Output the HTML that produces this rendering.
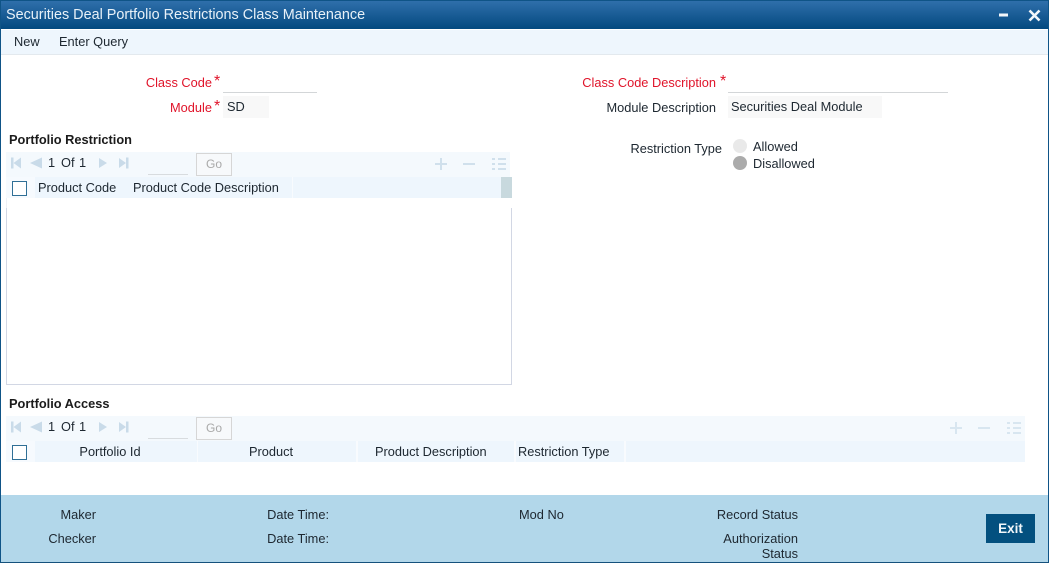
<!DOCTYPE html>
<html><head><meta charset="utf-8"><style>
html,body{margin:0;padding:0;background:#fff;width:1049px;height:565px;overflow:hidden}
body{position:relative;font-family:"Liberation Sans",Arial,sans-serif;font-size:12.8px;color:#1d2730}
.a{position:absolute}
.t{position:absolute;white-space:nowrap;line-height:18px}
.r{text-align:right}
.c{text-align:center}
.red{color:#e0142a}
.s{font-size:16px;line-height:18px}
.b{font-weight:bold;color:#1b1b1b}
.cb{position:absolute;width:13px;height:13px;border:1px solid #2f6f96;background:#fff}
.go{position:absolute;width:34px;height:21px;border:1px solid #d6d6d6;color:#a9a9a9;text-align:center;line-height:21px;background:#f7f9fb;box-sizing:content-box;font-size:12px}
</style></head><body>
<div class="a" style="left:0;top:0;width:1049px;height:563px;box-sizing:border-box;border:1px solid #0f5487;border-bottom:0"></div>
<div class="a" style="left:1px;top:1px;width:1047px;height:28px;background:linear-gradient(#2f6fab,#03497f)"></div>
<div class="t" style="left:6px;top:6px;color:#e8f1f8;font-size:14.4px">Securities Deal Portfolio Restrictions Class Maintenance</div>
<svg class="a" style="left:990px;top:4px" width="56" height="22"><path d="M9 11h9" stroke="#f2f6fa" stroke-width="3"/><path d="M39.500 6.500l10 10M49.500 6.500l-10 10" stroke="#f2f6fa" stroke-width="2.6"/></svg>
<div class="a" style="left:1px;top:30px;width:1047px;height:24px;background:#eef6fd;border-bottom:1px solid #e3e9ee"></div>
<div class="t" style="left:14px;top:33px">New</div>
<div class="t" style="left:59px;top:33px">Enter Query</div>

<div class="t r red" style="left:100px;width:112px;top:74px">Class Code</div><div class="t red s" style="left:214px;top:73px">*</div>
<div class="a" style="left:223px;top:92px;width:94px;height:1px;background:#d3d6d8"></div>
<div class="t r red" style="left:100px;width:112px;top:99px">Module</div><div class="t red s" style="left:214px;top:98px">*</div>
<div class="a" style="left:223px;top:96px;width:46px;height:22px;background:#f8f8f8"></div>
<div class="t" style="left:227px;top:98px">SD</div>

<div class="t r red" style="left:520px;width:196px;top:74px">Class Code Description</div><div class="t red s" style="left:720px;top:73px">*</div>
<div class="a" style="left:728px;top:92px;width:220px;height:1px;background:#d3d6d8"></div>
<div class="t r" style="left:520px;width:196px;top:99px">Module Description</div>
<div class="a" style="left:728px;top:96px;width:154px;height:22px;background:#f8f8f8"></div>
<div class="t" style="left:731px;top:98px">Securities Deal Module</div>
<div class="t r" style="left:560px;width:162px;top:140px">Restriction Type</div>
<div class="a" style="left:733px;top:139px;width:14px;height:14px;border-radius:50%;background:#e9e9e9"></div>
<div class="t" style="left:753px;top:138px">Allowed</div>
<div class="a" style="left:733px;top:156px;width:14px;height:14px;border-radius:50%;background:#ababab"></div>
<div class="t" style="left:753px;top:155px">Disallowed</div>

<!-- Portfolio Restriction -->
<div class="t b" style="left:9px;top:131px">Portfolio Restriction</div>
<div class="a" style="left:6px;top:152px;width:504px;height:25px;background:#f4f9fd"></div>
<div class="a" style="left:6px;top:177px;width:495px;height:21px;background:#eef6fd"></div>
<div class="a" style="left:6px;top:177px;width:29px;height:21px;background:#f6fafe"></div>
<div class="a" style="left:501px;top:177px;width:11px;height:21px;background:#c8d9de"></div>
<div class="a" style="left:292px;top:177px;width:1px;height:21px;background:#f8fbfe"></div>
<svg class="a" style="left:9px;top:156px" width="122" height="14" fill="#c9dbe9"><path d="M2 1.500h2.500v11H2zM12 1.500v11L4.500 7zM33 1.500v11L21 7zM90 2l8 5-8 5zM110 2l7 5-7 5zM117 1.500h2.500v11H117z"/></svg>
<div class="t" style="left:48px;top:154px">1</div><div class="t" style="left:61px;top:154px">Of</div><div class="t" style="left:79px;top:154px">1</div>
<div class="a" style="left:148px;top:174px;width:40px;height:1px;background:#d8dcdf"></div>
<div class="go" style="left:196px;top:153px">Go</div>
<svg class="a" style="left:432px;top:155px" width="76" height="18" fill="none" stroke="#d0e0ec" stroke-width="2"><path d="M9 3v12M3 9h12M31 9h12"/><path d="M60 4h3M66 4h8M60 9h3M66 9h8M60 14h3M66 14h8" stroke-width="2"/></svg>
<div class="cb" style="left:12px;top:181px"></div>
<div class="t" style="left:38px;top:179px">Product Code</div>
<div class="t" style="left:133px;top:179px">Product Code Description</div>
<div class="a" style="left:6px;top:208px;width:506px;height:177px;box-sizing:border-box;border:1px solid #d2d7e4;border-top:0"></div>
<div class="a" style="left:6px;top:198px;width:1px;height:10px;background:#eef0f5"></div>
<div class="a" style="left:511px;top:208px;width:1px;height:3px;background:#d2d7e4"></div>

<!-- Portfolio Access -->
<div class="t b" style="left:9px;top:395px">Portfolio Access</div>
<div class="a" style="left:6px;top:416px;width:1019px;height:25px;background:#f4f9fd"></div>
<div class="a" style="left:6px;top:441px;width:1019px;height:21px;background:#eef6fd"></div>
<div class="a" style="left:6px;top:441px;width:29px;height:21px;background:#f6fafe"></div>
<div class="a" style="left:197px;top:441px;width:1px;height:21px;background:#f8fbfe"></div>
<div class="a" style="left:356px;top:441px;width:2px;height:21px;background:#f8fbfe"></div>
<div class="a" style="left:514px;top:441px;width:2px;height:21px;background:#f8fbfe"></div>
<div class="a" style="left:624px;top:441px;width:2px;height:21px;background:#f8fbfe"></div>
<svg class="a" style="left:9px;top:420px" width="122" height="14" fill="#c9dbe9"><path d="M2 1.500h2.500v11H2zM12 1.500v11L4.500 7zM33 1.500v11L21 7zM90 2l8 5-8 5zM110 2l7 5-7 5zM117 1.500h2.500v11H117z"/></svg>
<div class="t" style="left:48px;top:418px">1</div><div class="t" style="left:61px;top:418px">Of</div><div class="t" style="left:79px;top:418px">1</div>
<div class="a" style="left:148px;top:438px;width:40px;height:1px;background:#d8dcdf"></div>
<div class="go" style="left:196px;top:417px">Go</div>
<svg class="a" style="left:947px;top:419px" width="76" height="18" fill="none" stroke="#d8e6f0" stroke-width="2"><path d="M9 3v12M3 9h12M31 9h12"/><path d="M60 4h3M66 4h8M60 9h3M66 9h8M60 14h3M66 14h8"/></svg>
<div class="cb" style="left:12px;top:445px"></div>
<div class="t c" style="left:36px;width:148px;top:443px">Portfolio Id</div>
<div class="t c" style="left:198px;width:146px;top:443px">Product</div>
<div class="t" style="left:375px;top:443px">Product Description</div>
<div class="t" style="left:518px;top:443px">Restriction Type</div>

<!-- Footer -->
<div class="a" style="left:1px;top:495px;width:1047px;height:67px;background:#b2d7ea"></div>
<div class="a" style="left:0;top:562px;width:1049px;height:1px;background:#15517c"></div>
<div class="t r" style="left:20px;width:76px;top:506px">Maker</div>
<div class="t r" style="left:20px;width:76px;top:530px">Checker</div>
<div class="t r" style="left:230px;width:99px;top:506px">Date Time:</div>
<div class="t r" style="left:230px;width:99px;top:530px">Date Time:</div>
<div class="t" style="left:519px;top:506px">Mod No</div>
<div class="t r" style="left:680px;width:118px;top:506px">Record Status</div>
<div class="t r" style="left:680px;width:118px;top:531px;line-height:15px">Authorization<br>Status</div>
<div class="a" style="left:986px;top:514px;width:49px;height:29px;background:#03507f;color:#f2f7fa;font-weight:bold;text-align:center;line-height:29px;font-size:13.5px">Exit</div>
</body></html>
